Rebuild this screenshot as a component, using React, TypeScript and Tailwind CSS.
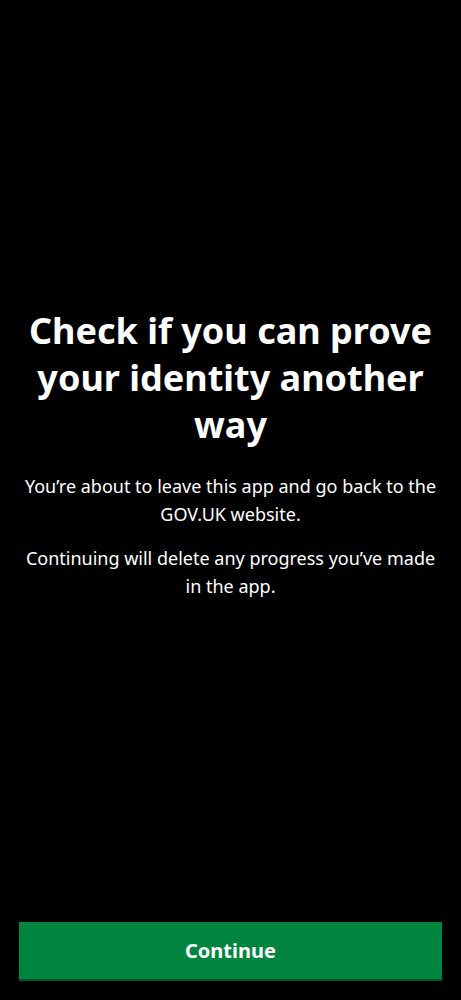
import React from 'react';

const font = { fontFamily: '"Noto Sans", "Open Sans", Arial, sans-serif' };

export default function App() {
  return (
    <div className="h-[1000px] w-full bg-black text-white flex flex-col" style={font}>
      {/* Content */}
      <div className="flex-1 flex flex-col justify-center items-center px-5 pb-4 text-center">
        <h1 className="text-[36px] leading-[47px] font-bold">
          Check if you can prove your identity another way
        </h1>
        <p className="mt-6 text-[18px] leading-[28px]">
          You’re about to leave this app and go back to the GOV.UK website.
        </p>
        <p className="mt-4 text-[18px] leading-[28px]">
          Continuing will delete any progress you’ve made in the app.
        </p>
      </div>

      {/* Footer */}
      <div className="px-[19px] pb-[19px]">
        <button
          type="button"
          className="w-full h-[59px] bg-[#00853f] border-b-2 border-[#00582a] text-white text-[20px] font-bold"
        >
          Continue
        </button>
      </div>
    </div>
  );
}
